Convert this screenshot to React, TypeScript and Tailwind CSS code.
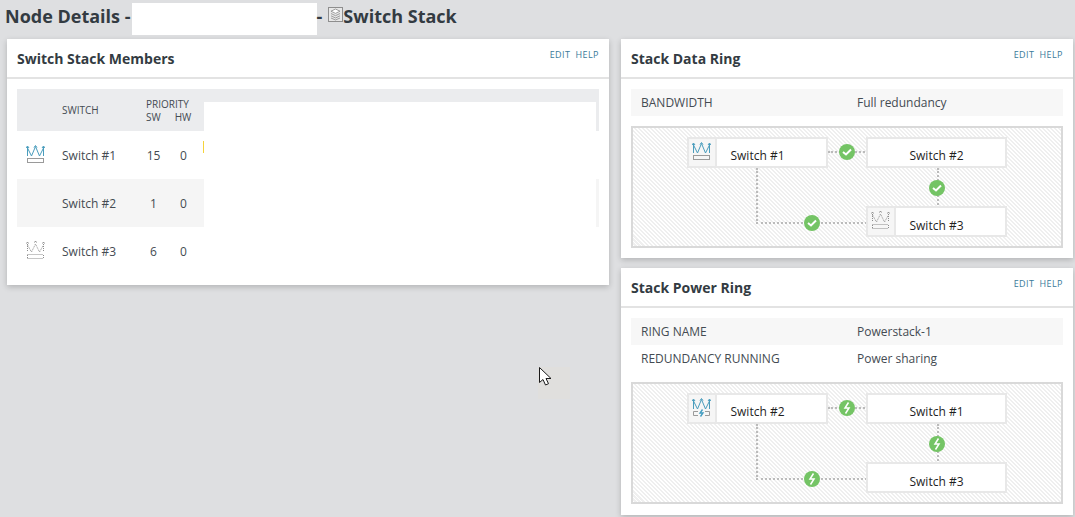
import React from "react";

const hatch =
  "bg-[repeating-linear-gradient(45deg,#ffffff,#ffffff_1.41px,#efefef_1.41px,#efefef_2.83px)]";

function Crown({ kind }: { kind: "master" | "standby" | "power" }) {
  if (kind === "standby") {
    return (
      <svg width="19" height="19" viewBox="0 0 19 19" fill="none" stroke="#8c8c8c" strokeWidth="1">
        <g strokeDasharray="1 1">
          <path d="M1.500 3v8M17.500 3v8M1.500 4l4 7 4-8 4 8 4-7" />
          <path d="M1.500 13.500h16M1.500 17.500h16M1.500 14v3M17.500 14v3" />
        </g>
        <path d="M0.500 2.500l1-1.500 1 1.500M8.500 1.500l1-1.500 1 1.500M16.500 2.500l1-1.500 1 1.500" />
      </svg>
    );
  }
  return (
    <svg width="19" height="19" viewBox="0 0 19 19" fill="none" strokeWidth="1">
      <path d="M1.500 1.500v9.500M17.500 1.500v9.500M1.500 3l4 8 4-9.500 4 9.500 4-8" stroke="#4a9dbd" />
      <path d="M0 3l1.500-2L3 3M8 2.500l1.500-2 1.500 2M16 3l1.500-2L19 3" stroke="#4a9dbd" />
      {kind === "master" ? (
        <rect x="1.500" y="13.500" width="16" height="4" stroke="#9a9a9a" />
      ) : (
        <>
          <path d="M6 13.500H1.500v4H6M13 13.500h4.500v4H13" stroke="#9a9a9a" />
          <path d="M10.500 11.500l-2.500 3.500h3l-2.500 3.500" stroke="#3f9bc0" strokeWidth="1.300" />
        </>
      )}
    </svg>
  );
}

function StackIcon() {
  return (
    <svg width="15" height="15" viewBox="0 0 15 15" fill="none" className="inline-block">
      <rect x="0.500" y="0.500" width="14" height="14" fill="#e8e8e8" stroke="#8e8e8e" />
      <path d="M7.500 2L12 4.200 7.500 6.400 3 4.200z" fill="#fff" stroke="#8a8a8a" strokeWidth="0.800" />
      <path d="M3 6.500l4.500 2.200L12 6.500M3 8.800l4.500 2.200L12 8.800M3 11l4.500 2L12 11" stroke="#8a8a8a" strokeWidth="0.800" />
    </svg>
  );
}

function Badge({ x, y, power }: { x: number; y: number; power?: boolean }) {
  return (
    <div
      className="absolute flex items-center justify-center rounded-full bg-[#74c465]"
      style={{ left: x - 8, top: y - 8, width: 16, height: 16 }}
    >
      {power ? (
        <svg width="8" height="12" viewBox="0 0 8 12" fill="none" stroke="#fff" strokeWidth="1.500">
          <path d="M5.500 0.500L2 6h4L2.500 11.500" />
        </svg>
      ) : (
        <svg width="10" height="8" viewBox="0 0 10 8" fill="none" stroke="#fff" strokeWidth="2">
          <path d="M1 4l3 2.500L9 1.500" />
        </svg>
      )}
    </div>
  );
}

function Node({
  x,
  y,
  label,
  icon,
  low,
}: {
  x: number;
  y: number;
  label: string;
  icon?: "master" | "standby" | "power";
  low?: boolean;
}) {
  return (
    <div
      className={`absolute flex h-[31px] w-[141px] items-center justify-center border-2 border-[#e8e8e8] bg-white text-[12px] leading-[16px] text-[#1f1f1f] ${low ? "pt-[8px]" : "pt-[6px]"}`}
      style={{ left: x, top: y }}
    >
      {icon && (
        <div className="absolute left-0 top-0 flex h-[27px] w-[28px] items-start justify-center border-r-2 border-[#e8e8e8] bg-[#f6f6f6] pr-[1px] pt-[3px]">
          <Crown kind={icon} />
        </div>
      )}
      {label}
    </div>
  );
}

function Ring({
  labels,
  icons,
  power,
}: {
  labels: [string, string, string];
  icons: [("master" | "power")?, "standby"?];
  power?: boolean;
}) {
  return (
    <div className={`relative h-[122px] w-[432px] border-2 border-[#d9d9d9] ${hatch}`}>
      <div className="absolute left-[195px] top-[23px] w-[40px] border-t-2 border-dotted border-[#bbbbbb]" />
      <div className="absolute left-[304px] top-[40px] h-[40px] border-l-2 border-dotted border-[#bbbbbb]" />
      <div className="absolute left-[123px] top-[40px] h-[56px] w-[111px] border-b-2 border-l-2 border-dotted border-[#bbbbbb]" />
      <Node x={54} y={9} label={labels[0]} icon={icons[0]} />
      <Node x={233} y={9} label={labels[1]} />
      <Node x={233} y={78} label={labels[2]} icon={icons[1]} low />
      <Badge x={214} y={24} power={power} />
      <Badge x={304} y={60} power={power} />
      <Badge x={179} y={95} power={power} />
    </div>
  );
}

function CardHeader({ title }: { title: string }) {
  return (
    <div className="relative h-[40px] border-b-2 border-[#e3e3e3] pl-[10px] pt-[10px] text-[14px] font-bold leading-[20px] text-[#333b42]">
      {title}
      <div className="absolute right-[10px] top-[9px] flex gap-[5px] text-[9px] font-normal leading-[14px] tracking-[0.45px] text-[#3a7a9a]">
        <span>EDIT</span>
        <span>HELP</span>
      </div>
    </div>
  );
}

function Row({
  icon,
  name,
  sw,
  shaded,
}: {
  icon?: "master" | "standby";
  name: string;
  sw: string;
  shaded?: boolean;
}) {
  return (
    <div className={`flex h-[48px] items-center text-[12px] text-[#444b52] ${shaded ? "bg-[#f5f5f5]" : "bg-white"}`}>
      <div className="mb-[2px] flex w-[45px] justify-center pr-[9px]">{icon && <Crown kind={icon} />}</div>
      <div className="w-[84px] pt-[2px]">{name}</div>
      <div className="w-[15px] pt-[2px] text-center">{sw}</div>
      <div className="ml-[15px] w-[15px] pt-[2px] text-center">0</div>
    </div>
  );
}

export default function App() {
  return (
    <div className="relative h-[517px] w-[1075px] overflow-hidden bg-[#dedfe1] font-['Open_Sans',sans-serif]">
      <div className="flex h-[39px] items-start pl-[5px] pt-[3px] text-[18px] font-bold leading-[26px] text-[#333b42]">
        <span>Node Details -</span>
        <div className="ml-[1px] h-[32px] w-[185px] bg-white" />
        <span className="mr-[6px]">-</span>
        <span className="mt-[4px] flex">
          <StackIcon />
        </span>
        <span>Switch Stack</span>
      </div>

      <div className="flex items-start gap-[12px] pl-[7px]">
        <div className="relative h-[246px] w-[602px] bg-white shadow-[0_2px_6px_rgba(0,0,0,0.2)]">
          <CardHeader title="Switch Stack Members" />
          <div className="mx-[10px] mt-[10px]">
            <div className="flex h-[42px] bg-[#ebecee] text-[10px] leading-[14px] text-[#444b52]">
              <div className="w-[45px]" />
              <div className="flex w-[84px] items-center">SWITCH</div>
              <div className="pt-[8px]">
                <div>PRIORITY</div>
                <div className="-mt-[1px] flex gap-[14px]">
                  <span>SW</span>
                  <span>HW</span>
                </div>
              </div>
            </div>
            <Row icon="master" name="Switch #1" sw="15" />
            <Row name="Switch #2" sw="1" shaded />
            <Row icon="standby" name="Switch #3" sw="6" />
          </div>
          <div className="absolute left-[197px] top-[63px] h-[173px] w-[392px] bg-white" />
          <div className="absolute left-[196px] top-[102px] h-[12px] w-[1px] bg-[#f5d33a]" />
        </div>

        <div className="flex w-[452px] flex-col gap-[10px]">
          <div className="h-[219px] bg-white shadow-[0_2px_6px_rgba(0,0,0,0.2)]">
            <CardHeader title="Stack Data Ring" />
            <div className="px-[10px] pt-[10px]">
              <div className="flex h-[27px] items-center bg-[#f7f7f7] pl-[10px] text-[12px] text-[#444b52]">
                <span className="w-[216px]">BANDWIDTH</span>
                <span>Full redundancy</span>
              </div>
              <div className="mt-[10px]">
                <Ring labels={["Switch #1", "Switch #2", "Switch #3"]} icons={["master", "standby"]} />
              </div>
            </div>
          </div>
          <div className="h-[247px] bg-white shadow-[0_2px_6px_rgba(0,0,0,0.2)]">
            <CardHeader title="Stack Power Ring" />
            <div className="px-[10px] pt-[10px]">
              <div className="flex h-[27px] items-center bg-[#f7f7f7] pl-[10px] text-[12px] text-[#444b52]">
                <span className="w-[216px]">RING NAME</span>
                <span>Powerstack-1</span>
              </div>
              <div className="flex h-[27px] items-center pl-[10px] text-[12px] text-[#444b52]">
                <span className="w-[216px]">REDUNDANCY RUNNING</span>
                <span>Power sharing</span>
              </div>
              <div className="mt-[10px]">
                <Ring labels={["Switch #2", "Switch #1", "Switch #3"]} icons={["power"]} power />
              </div>
            </div>
          </div>
        </div>
      </div>

      <div className="absolute left-[538px] top-[367px] h-[32px] w-[32px] bg-[#e0dfdd]" />
      <svg className="absolute left-[538px] top-[366px]" width="16" height="22" viewBox="0 0 16 22" fill="#fff" stroke="#1a1a1a" strokeWidth="1">
        <path d="M1.500 1.500v15l3.500-3 2.500 5.500 3-1.300L8 12.500h5z" />
      </svg>
    </div>
  );
}
